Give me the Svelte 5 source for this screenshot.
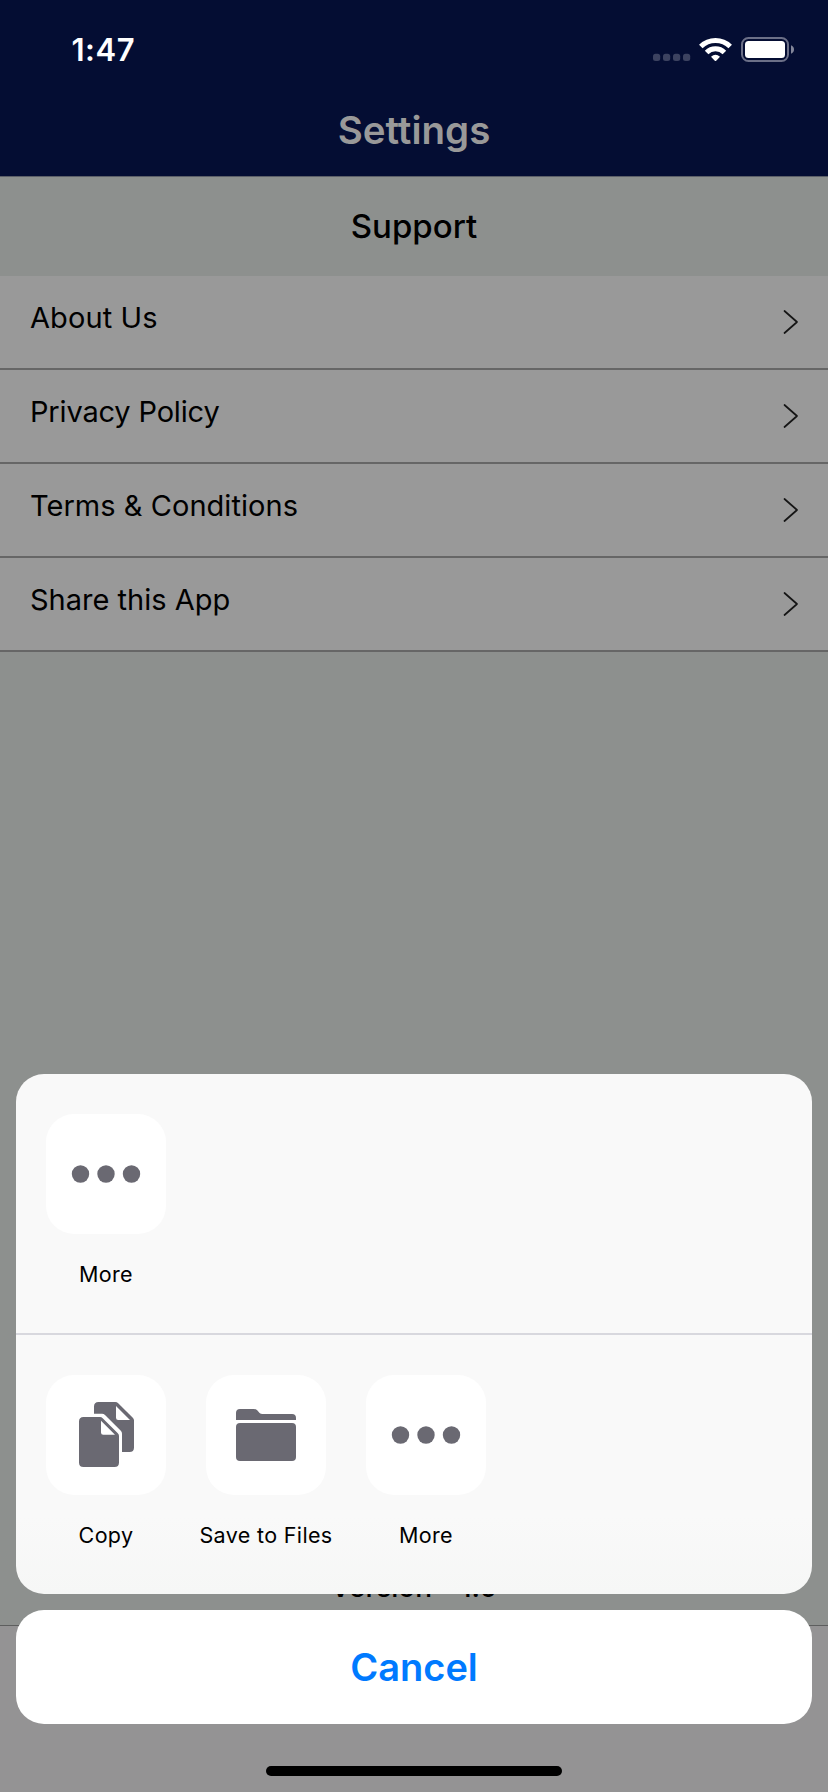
<script>
  const rows = [
    { label: 'About Us', spacing: 0.1 },
    { label: 'Privacy Policy', spacing: -0.17 },
    { label: 'Terms & Conditions', spacing: 0.04 },
    { label: 'Share this App', spacing: 0 }
  ];
  const shareTargets = [{ label: 'More', icon: 'more' }];
  const actions = [
    { label: 'Copy', icon: 'copy' },
    { label: 'Save to Files', icon: 'folder' },
    { label: 'More', icon: 'more' }
  ];
</script>

{#snippet tile(item)}
  <div class="item">
    <div class="tile">
      <svg width="120" height="120" viewBox="0 0 120 120" fill="#6a6972">
        {#if item.icon === 'more'}
          <circle cx="34.5" cy="60" r="8.7" />
          <circle cx="60" cy="60" r="8.7" />
          <circle cx="85.5" cy="60" r="8.7" />
        {:else if item.icon === 'copy'}
          <path d="M48 38.8V31.5Q48 27 52.5 27H69.3Q71 27 72.2 28.2L86.8 42.7Q88 44 88 45.5V72.5Q88 77 83.5 77H76V58.8Q76 57 74.8 55.8L59 40Q57.8 38.8 56 38.8Z" />
          <path d="M33 46.5Q33 42 37.5 42H54Q55.5 42 56.7 43.2L71.8 58.3Q73 59.5 73 61V87.5Q73 92 68.5 92H37.5Q33 92 33 87.5Z" />
          <path fill="#fff" d="M70 31L84 45H72.2Q70 45 70 42.8ZM55 45.8L69 59.8H57.2Q55 59.8 55 57.6Z" />
        {:else}
          <path d="M30 45V38Q30 34 34 34H48Q50 34 51.2 35.3L53.6 37.9Q54.6 39 56.5 39H86Q90 39 90 43V45Z" />
          <rect x="30" y="48" width="60" height="38" rx="4" />
        {/if}
      </svg>
    </div>
    <span class="caption">{item.label}</span>
  </div>
{/snippet}

<div class="screen">
  <header>
    <div class="status">
      <span class="time">1:47</span>
      <svg class="indicators" width="144" height="30" viewBox="652 34 144 30">
        <g fill="#3c4260">
          <rect x="653" y="53.7" width="7.2" height="7.3" rx="2.5" />
          <rect x="663" y="53.7" width="7.2" height="7.3" rx="2.5" />
          <rect x="673" y="53.7" width="7.2" height="7.3" rx="2.5" />
          <rect x="683" y="53.7" width="7.2" height="7.3" rx="2.5" />
        </g>
        <g fill="none" stroke="#fff" stroke-width="5">
          <path d="M700.8 46.5A21 21 0 0 1 730.2 46.5" />
          <path d="M706.6 52.5A12.6 12.6 0 0 1 724.4 52.5" />
        </g>
        <path fill="#fff" d="M711 56.7Q715.5 53 720 56.700L716.2 60.7Q715.5 61.3 714.8 60.7Z" />
        <rect x="742" y="38" width="46" height="23" rx="6.5" fill="none" stroke="#6b6f87" stroke-width="2" />
        <rect x="745" y="41" width="40" height="17" rx="3.5" fill="#fff" />
        <path d="M791 45.3Q794 46.5 794 49.5Q794 52.5 791 53.7Z" fill="#83869a" />
      </svg>
    </div>
    <h1>Settings</h1>
  </header>

  <h2>Support</h2>
  <ul>
    {#each rows as row}
      <li>
        <span class="label" style="letter-spacing: {row.spacing}px">{row.label}</span>
        <svg width="16" height="26" viewBox="0 0 16 26" fill="none" stroke="#151515" stroke-width="1.7" stroke-linecap="round" stroke-linejoin="round">
          <path d="M1.5 2L14 13L1.5 24" />
        </svg>
      </li>
    {/each}
  </ul>
  <p class="version">Version - 1.0</p>
  <div class="tabbar"></div>

  <div class="overlay">
    <section class="sheet">
      <div class="group first">
        {#each shareTargets as item}{@render tile(item)}{/each}
      </div>
      <div class="group">
        {#each actions as item}{@render tile(item)}{/each}
      </div>
    </section>
    <button>Cancel</button>
    <div class="home"></div>
  </div>
</div>

<style>
  :global(body) {
    margin: 0;
  }
  .screen {
    position: relative;
    display: flex;
    flex-direction: column;
    width: 828px;
    height: 1792px;
    overflow: hidden;
    background: #8d908e;
    color: #000;
    font-family: Inter, 'Liberation Sans', sans-serif;
  }
  header {
    box-sizing: border-box;
    height: 177px;
    background: #040d33;
    border-bottom: 1px solid #5c5f68;
  }
  .status {
    display: flex;
    justify-content: space-between;
    align-items: flex-start;
    box-sizing: border-box;
    height: 100px;
    padding: 34px 32px 0 71.5px;
  }
  .time {
    font-size: 31px;
    font-weight: 600;
    line-height: 31px;
    letter-spacing: 0.5px;
    color: #fff;
  }
  h1,
  h2,
  ul,
  p {
    margin: 0;
    padding: 0;
  }
  h1 {
    text-align: center;
    font-size: 38.5px;
    font-weight: 600;
    line-height: 60px;
    font-variant-ligatures: none;
    color: #999;
  }
  h2 {
    height: 99px;
    text-align: center;
    font-size: 33px;
    font-weight: 500;
    line-height: 98px;
  }
  li {
    display: flex;
    justify-content: space-between;
    box-sizing: border-box;
    height: 94px;
    padding: 0 29px 0 30px;
    list-style: none;
    background: #999;
    border-bottom: 2px solid #666;
  }
  .label {
    font-size: 29px;
    line-height: 83px;
  }
  li svg {
    margin-top: 33px;
  }
  .version {
    margin-top: auto;
    text-align: center;
    font-size: 28px;
    font-weight: 500;
    line-height: 40px;
    padding-bottom: 18px;
  }
  .tabbar {
    box-sizing: border-box;
    height: 167px;
    background: #949394;
    border-top: 1px solid #5d5e5e;
  }
  .overlay {
    position: absolute;
    inset: 0;
    display: flex;
    flex-direction: column;
    justify-content: flex-end;
    padding: 0 16px 16px;
  }
  .sheet {
    height: 520px;
    border-radius: 28px;
    background: linear-gradient(#f9f9f9 85%, #f6f7f6);
  }
  .group {
    display: flex;
    gap: 40px;
    padding: 40px 30px 0;
  }
  .group.first {
    box-sizing: border-box;
    height: 261px;
    border-bottom: 2px solid #d8d8de;
  }
  .item {
    display: flex;
    flex-direction: column;
    align-items: center;
    width: 120px;
  }
  .tile {
    width: 120px;
    height: 120px;
    border-radius: 28px;
    background: #fff;
  }
  .tile svg {
    display: block;
  }
  .caption {
    margin-top: 25px;
    white-space: nowrap;
    font-size: 21.5px;
    line-height: 30px;
    letter-spacing: 0.35px;
  }
  button {
    height: 114px;
    margin-top: 16px;
    padding: 0;
    border: 0;
    border-radius: 28px;
    background: #fff;
    color: #007aff;
    font-family: inherit;
    font-size: 38px;
    font-weight: 600;
  }
  .home {
    width: 296px;
    height: 10px;
    margin: 42px auto 0;
    border-radius: 5px;
    background: #000;
  }
</style>
